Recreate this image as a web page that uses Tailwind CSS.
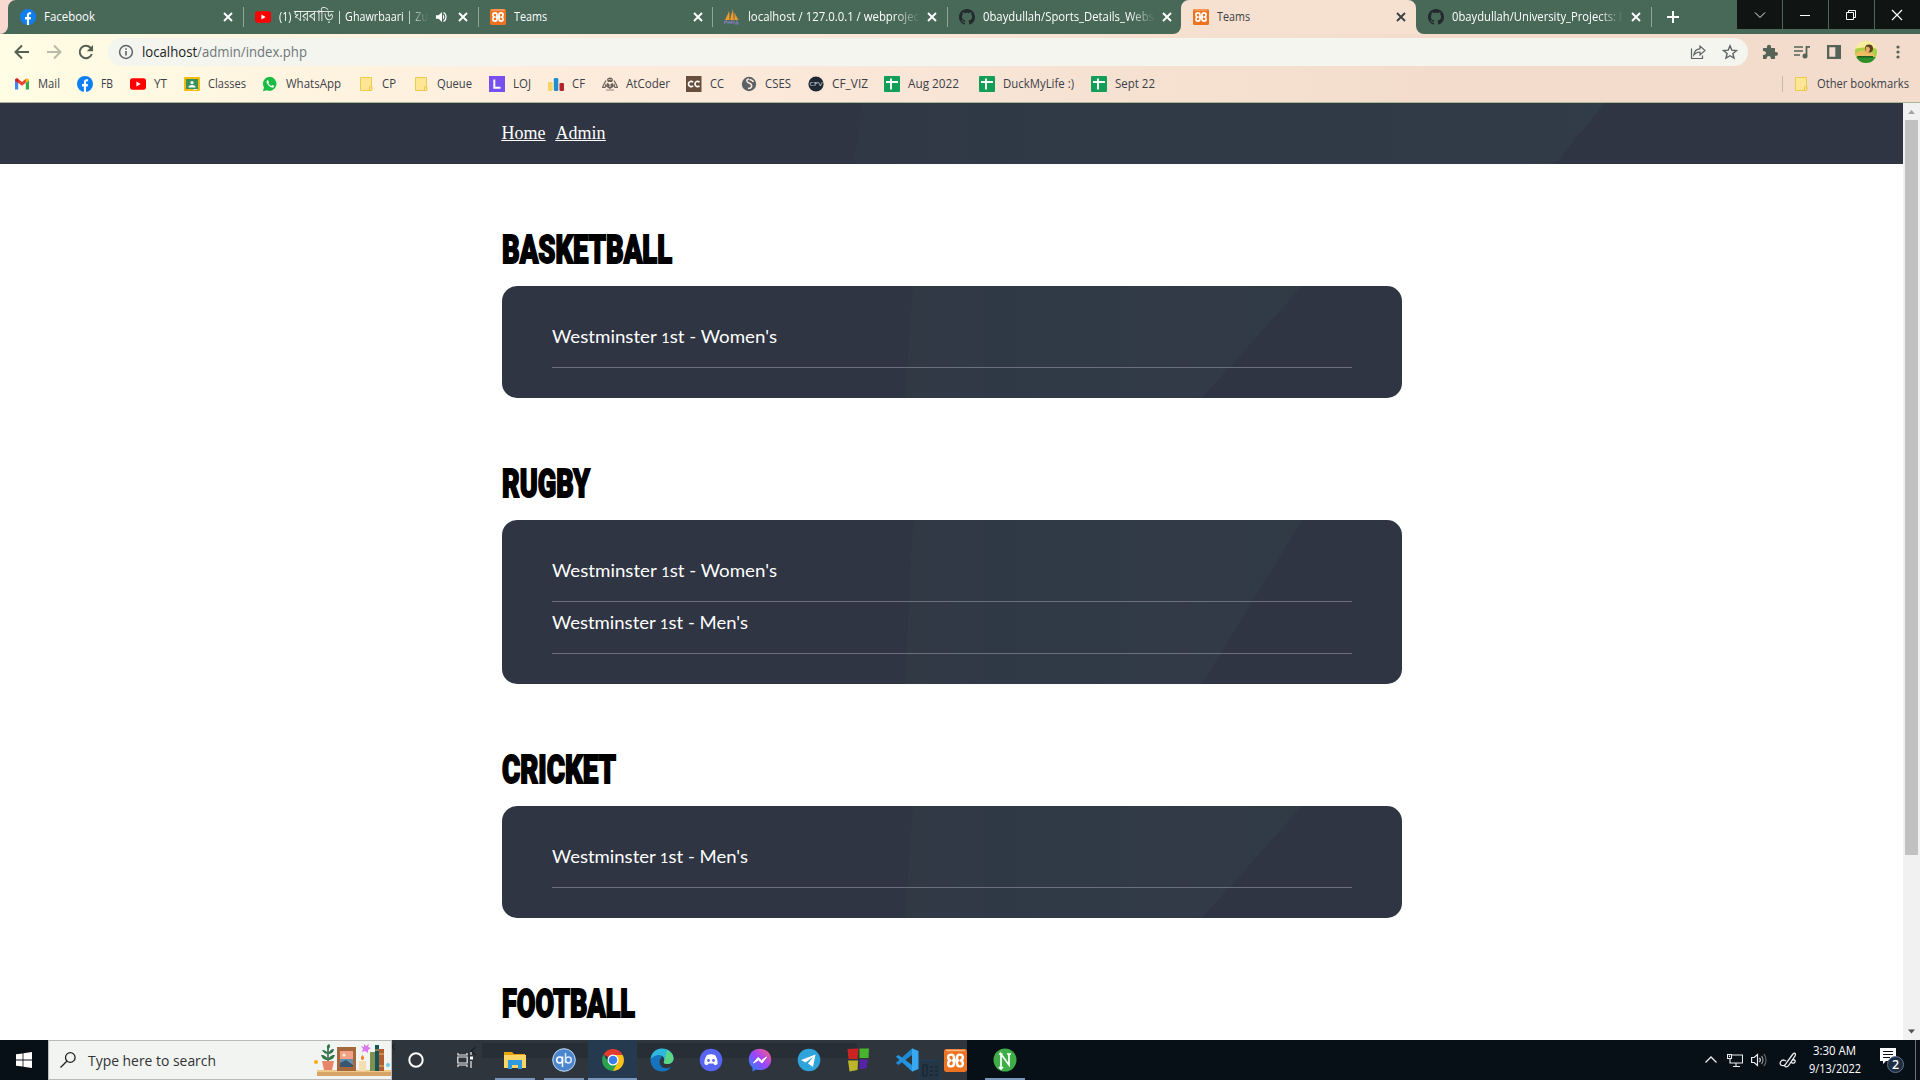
<!DOCTYPE html>
<html lang="en">
<head>
<meta charset="utf-8">
<title>Teams</title>
<script src="https://cdn.jsdelivr.net/npm/@tailwindcss/browser@4"></script>
</head>
<body class="w-[1920px] h-[1080px] overflow-hidden bg-white flex flex-col font-['Open_Sans','Noto_Sans',sans-serif] text-xs">

<svg class="hidden">
  <symbol id="fb" viewBox="0 0 16 16"><circle cx="8" cy="8" r="8" fill="#0d7ff2"/><path d="M6.9 16v-5.6H5V8h1.9V6.3c0-2 1.1-3 2.9-3 .7 0 1.3.1 1.3.1v1.9h-.9c-.9 0-1.2.5-1.2 1.1V8H11l-.4 2.4H9V16z" fill="#fff"/></symbol>
  <symbol id="yt" viewBox="0 0 16 16"><rect y="2.3" width="16" height="11.4" rx="2.6" fill="#f00"/><path d="M6.4 5.6v4.8L10.6 8z" fill="#fff"/></symbol>
  <symbol id="xampp" viewBox="0 0 16 16"><rect width="16" height="16" rx="1.5" fill="#ee7320"/><rect x="1.5" y=".5" width="13" height="1" fill="#f8b98c"/><path d="M7 6.200C7 4.400 6.300 3.900 5 3.900 3.400 3.900 2.900 4.800 2.900 5.800 2.900 6.900 3.600 7.800 4.500 8 3.600 8.200 2.900 9.200 2.900 10.200c0 1 .5 1.900 2.100 1.900 1.300 0 2-.5 2-2.300M9 6.200c0-1.800.7-2.300 2-2.300 1.600 0 2.100.9 2.100 1.900 0 1.100-.7 2-1.600 2.200.9.200 1.600 1.200 1.600 2.200 0 1-.5 1.900-2.100 1.900-1.300 0-2-.5-2-2.300M6.300 8h3.400M7 6v1l-.7 1 .7 1v1M9 6v1l.7 1-.7 1v1" fill="none" stroke="#fff" stroke-width="1.700" stroke-linejoin="round"/></symbol>
  <symbol id="pma" viewBox="0 0 16 16"><path d="M1 11L5 2.500 5.500 11zM6 11L8.500.5l1.500 10.500zM10.500 11V4l4 7z" fill="#f59a24"/><path d="M5 2.500L6 11M8.500.5L10.500 11M10.500 4l3.500 7" stroke="#aa8554" stroke-width=".8"/><path d="M.5 15v-3h2v1.500h-2M4 12v3m0-1.500h2m0-1.500v3m1.500 0v-3l1.200 1.500L10 12v3m1.500 0l1.500-3 1.500 3z" fill="none" stroke="#777aa8" stroke-width="1.100"/></symbol>
  <symbol id="gh" viewBox="0 0 16 16"><path fill="#24292f" d="M8 0C3.580 0 0 3.580 0 8c0 3.540 2.290 6.530 5.470 7.590.4.070.55-.17.55-.38 0-.19-.01-.82-.01-1.490-2.010.37-2.530-.49-2.690-.94-.09-.23-.48-.94-.82-1.130-.28-.15-.68-.52-.01-.53.63-.01 1.080.58 1.230.82.72 1.210 1.870.87 2.330.66.07-.52.28-.87.51-1.070-1.780-.2-3.640-.89-3.640-3.950 0-.87.31-1.590.82-2.150-.08-.2-.36-1.020.08-2.120 0 0 .67-.21 2.200.82.64-.18 1.320-.27 2-.27s1.360.09 2 .27c1.530-1.040 2.200-.82 2.200-.82.44 1.100.16 1.920.08 2.120.51.56.82 1.270.82 2.150 0 3.070-1.870 3.750-3.650 3.950.29.25.54.73.54 1.480 0 1.070-.01 1.930-.01 2.200 0 .21.15.46.55.38A8.010 8.010 0 0 0 16 8c0-4.420-3.580-8-8-8z"/></symbol>
  <symbol id="x" viewBox="0 0 16 16"><path d="M4 4l8 8M12 4l-8 8" stroke="currentColor" stroke-width="1.900"/></symbol>
  <symbol id="speaker" viewBox="0 0 16 16"><path d="M3 6.200h2.500L9 3v10L5.500 9.800H3zM10 5.500c1.700 1 1.700 4 0 5z" fill="currentColor"/><path d="M10.500 3.500c3.300 1.500 3.300 7.500 0 9" fill="none" stroke="currentColor" stroke-width="1.200"/></symbol>
  <symbol id="gmail" viewBox="0 0 16 16"><path d="M1 13.500V4l3.200 2.400v7.100z" fill="#4285f4"/><path d="M11.800 13.500V6.400L15 4v9.500z" fill="#34a853"/><path d="M1 4.500C1 2.300 3 2 4 2.800L8 5.900 12 2.800v3.800L8 9.700 1 4.600z" fill="#ea4335"/><path d="M11.800 2.900c1.200-1 3.200-.4 3.200 1.600l-3.200 2.400z" fill="#fbbc04"/><path d="M1 4.400c0-1.600 1.900-2.400 3.200-1.500v4z" fill="#c5221f"/></symbol>
  <symbol id="classes" viewBox="0 0 16 16"><rect y="1" width="16" height="14" rx="1" fill="#f6b912"/><rect x="2" y="3" width="12" height="10" fill="#36935a"/><circle cx="8" cy="6.700" r="1.600" fill="#fff"/><path d="M4.300 11.500c.2-3.300 7.200-3.300 7.400 0z" fill="#fff"/><path d="M9.500 13h3.500v1H9.500z" fill="#eee"/></symbol>
  <symbol id="wa" viewBox="0 0 16 16"><path d="M8 .8a7 7 0 0 0-6 10.600L.9 15.300l4-1A7 7 0 1 0 8 .8z" fill="#18bd45"/><path d="M5.300 4.300c-.9.700-1 2-.2 3.300 1.200 2 2.800 3.500 5 4 1.200.2 2.200-.8 2-1.600-.3-.5-1.400-.9-1.900-1l-.9 1c-1.500-.6-2.300-1.500-3-2.700l.7-.9-.8-2z" fill="#fff"/></symbol>
  <symbol id="folder" viewBox="0 0 16 16"><path d="M2.500 1.500h11v10.500h-1v2.500h-10z" fill="#ffe694" stroke="#ecc94f"/><rect x="11.500" y="10.500" width="2.500" height="4" rx="1" fill="#ffe694" stroke="#e8c33c"/></symbol>
  <symbol id="loj" viewBox="0 0 16 16"><rect width="16" height="16" fill="#7750f0"/><path d="M5.300 3.500v8.200h6.200" fill="none" stroke="#fff" stroke-width="2"/></symbol>
  <symbol id="cf" viewBox="0 0 16 16"><rect y="6" width="4.500" height="9" rx="1.200" fill="#f8d35e"/><rect x="5.800" y="2" width="4.500" height="13" rx="1.200" fill="#1f8fce"/><rect x="11.500" y="7" width="4.500" height="8" rx="1.200" fill="#b5222b"/></symbol>
  <symbol id="atc" viewBox="0 0 16 16"><path d="M5 4c0-3.500 6-3.500 6 0l-1 2H6zM5.500 6.500L8 9l2.500-2.500 1.500 4L8 13l-4-2.500z" fill="#6b6259"/><path d="M4 4.500L1.500 9 .6 11.500h2.500L4 8M12 4.500L14.500 9l.9 2.500h-2.500L12 8" fill="none" stroke="#6b645c" stroke-width="1.200"/><path d="M4 14h8" stroke="#8c8379"/><path d="M6.500 3.500h1m1 0h1M7 10h2" stroke="#f5e8d8"/></symbol>
  <symbol id="cc" viewBox="0 0 16 16"><rect width="15.500" height="16" fill="#694e3d"/><path d="M7 6.300C5.500 4.500 2.500 5.300 2.500 8S5.500 11.500 7 9.700M13.500 6.300C12 4.500 9 5.300 9 8s3 3.500 4.500 1.700" fill="none" stroke="#fff" stroke-width="1.700"/></symbol>
  <symbol id="cses" viewBox="0 0 16 16"><circle cx="8" cy="8" r="7.200" fill="#5b6166"/><path d="M8 3C5 3 5.500 6.500 8 7c3 .8 3.500 3.500 1.500 5l-2.500.5M8.500 3.500c1.500.5 3 .5 4 2.500" fill="none" stroke="#fbe9d9" stroke-width="1.600"/></symbol>
  <symbol id="cfv" viewBox="0 0 16 16"><circle cx="8" cy="8" r="7.600" fill="#1e2830"/><text x="1.500" y="10.300" textLength="13" lengthAdjust="spacingAndGlyphs" font-family="Lato" font-size="6.500" fill="#d7dde0">CFV</text></symbol>
  <symbol id="sheet" viewBox="0 0 16 16"><rect width="16" height="16" rx="1" fill="#129e57"/><path d="M7 2.500v11M2 6h12" stroke="#fff" stroke-width="1.900"/></symbol>
</svg>

<!-- Tab strip -->
<div class="flex h-[34px] shrink-0 bg-[#486858] text-white relative">
  <div class="w-[8.5px] shrink-0"></div>
  <div id="tabs" class="flex h-full w-[1642px] shrink-0"></div>
  <div class="w-[45px] flex items-center justify-center shrink-0"><svg class="w-4 h-4" viewBox="0 0 16 16"><path d="M8 2v12M2 8h12" stroke="#fff" stroke-width="2"/></svg></div>
  <div class="ml-auto flex h-[29px] gap-px">
    <div class="w-[45px] bg-[#101513] flex items-center justify-center"><svg class="w-3 h-3" viewBox="0 0 12 12"><path d="M1 3.500l5 5 5-5" fill="none" stroke="#eee"/></svg></div>
    <div class="w-[45px] bg-[#101513] flex items-center justify-center pr-px"><svg class="w-3 h-3" viewBox="0 0 12 12"><path d="M1 6.500h10" stroke="#fff"/></svg></div>
    <div class="w-[45px] bg-[#101513] flex items-center justify-center pr-px"><svg class="w-3 h-3" viewBox="0 0 12 12"><path d="M1.500 3.500h7v7h-7zM3.500 3V1.500h7v7H9" fill="none" stroke="#fff"/></svg></div>
    <div class="w-[45px] bg-[#101513] flex items-center justify-center pr-px"><svg class="w-3 h-3" viewBox="0 0 12 12"><path d="M1 1l10 10M11 1L1 11" stroke="#fff" stroke-width="1.200"/></svg></div>
  </div>
  <svg class="absolute left-0 top-0 w-4 h-[34px]" viewBox="0 0 16 34"><path d="M0 0h16a8 8 0 0 0-8 8v18a8 8 0 0 1-8 8z" fill="#f9d8cf"/></svg>
</div>

<!-- Toolbar and bookmarks -->
<div class="h-[69px] shrink-0 flex flex-col border-b border-[#a9b598] bg-linear-to-r from-[#fffde4] via-[#fdecdc] via-30% to-[#f3dccc] to-75%">
  <div class="flex items-center h-9 text-[#566457]">
    <div class="flex items-center pl-3 gap-3 w-[108px]">
      <svg class="w-5 h-5" viewBox="0 0 20 20"><path d="M17 10H4M10 3.500L3.500 10l6.500 6.500" fill="none" stroke="#556055" stroke-width="2"/></svg>
      <svg class="w-5 h-5" viewBox="0 0 20 20"><path d="M3 10h13M10 3.500l6.500 6.500-6.500 6.500" fill="none" stroke="#b9bba9" stroke-width="2"/></svg>
      <svg class="w-5 h-5" viewBox="0 0 20 20"><path d="M15.800 12A6.200 6.200 0 1 1 14.500 5.700L16 7.200" fill="none" stroke="#556055" stroke-width="2"/><path d="M17 3v6.200h-6.200z" fill="#556055"/></svg>
    </div>
    <div class="flex items-center h-7 w-[1640px] rounded-full bg-[#f3f5ee] pl-2.5">
      <svg class="w-4 h-4" viewBox="0 0 16 16"><circle cx="8" cy="8" r="6.400" fill="none" stroke="#5f6368" stroke-width="1.500"/><path d="M8 7v4.500M8 4.300v1.500" stroke="#5f6368" stroke-width="1.600"/></svg>
      <svg class="ml-2 w-[165px] h-5 overflow-visible text-sm" fill="#70757a"><text y="15" textLength="165" lengthAdjust="spacingAndGlyphs"><tspan fill="#222">localhost</tspan>/admin/index.php</text></svg>
      <div class="ml-auto flex items-center gap-4 pr-2.5">
        <svg class="w-4 h-4" viewBox="0 0 16 16"><path d="M1.500 4.500v10h11v-3" fill="none" stroke="#5f6368" stroke-width="1.200"/><path d="M3.800 11C4.300 7 6.500 5 10 4.800V2l5 4.500-5 4.500V8C7.500 8 5.500 8.800 3.800 11z" fill="none" stroke="#5f6368" stroke-width="1.200"/></svg>
        <svg class="w-4 h-4" viewBox="0 0 16 16"><path d="M8 1.800l1.800 4.300 4.700.4-3.600 3 1.100 4.600L8 11.700 4 14.100l1.100-4.600-3.600-3 4.700-.4z" fill="none" stroke="#5f6368" stroke-width="1.400"/></svg>
      </div>
    </div>
    <div class="flex items-center pl-[14px] gap-4">
      <svg class="w-4 h-4" viewBox="0 0 16 16"><path d="M1 4h4c-1-4.500 5-4.500 4 0h4v4c4-1 4 4.500 0 3.800V15H9c0-4-4.500-4-4.500 0H1v-4c4 0 4-4 0-4z" fill="#566457"/></svg>
      <svg class="w-4 h-4" viewBox="0 0 16 16"><path d="M0 3h9M0 7h9M0 11h6" stroke="#566457" stroke-width="1.600"/><path d="M16 2.800h-3.500v8.400" fill="none" stroke="#566457" stroke-width="1.800"/><circle cx="11" cy="12" r="2.500" fill="#566457"/></svg>
      <svg class="w-4 h-4" viewBox="0 0 16 16"><path d="M1 1h14v14H1zM3.300 3.300v9.400h6V3.300z" fill="#566457" fill-rule="evenodd"/></svg>
      <svg class="w-[22px] h-[22px] -ml-[3px]" viewBox="0 0 22 22"><clipPath id="av"><circle cx="11" cy="11" r="11"/></clipPath><g clip-path="url(#av)"><path d="M0 0h22v22H0z" fill="#f8ee9a"/><path d="M0 8c5-2 17-2 22 0v14H0z" fill="#a9cf45"/><path d="M0 16h22v6H0z" fill="#2f8f2c"/><path d="M1 13c2-4 8-4 11-3l5 2c3 1 3 4 0 4H4c-2 0-3-1-3-3z" fill="#edbd66"/><circle cx="14" cy="7.500" r="4" fill="#5f3f22"/><path d="M11 6c3-1 4 1 4 3l-2 3c-2 0-3-3-2-6z" fill="#e5b063"/><path d="M2 15h16v1.500H3z" fill="#1f5d20"/></g></svg>
      <svg class="w-4 h-4 -ml-[3px]" viewBox="0 0 16 16" fill="#566457"><circle cx="8" cy="3" r="1.600"/><circle cx="8" cy="8" r="1.600"/><circle cx="8" cy="13" r="1.600"/></svg>
    </div>
  </div>
  <div class="flex items-center h-7 text-[#3c4048]">
    <div id="bookmarks" class="flex items-center pl-[14px]"></div>
    <div class="ml-auto flex items-center pr-[11px]">
      <div class="w-px h-4 bg-[#c9b7a8]"></div>
      <svg class="w-4 h-4 ml-2.5"><use href="#folder"/></svg>
      <svg class="ml-2 w-[92px] h-5 overflow-visible" fill="currentColor"><text y="14" textLength="92" lengthAdjust="spacingAndGlyphs">Other bookmarks</text></svg>
    </div>
  </div>
</div>

<!-- Page -->
<div class="flex h-[937px] shrink-0">
  <main class="w-[1903px] h-full overflow-hidden bg-white">
    <header class="h-[61px] bg-[#2f3542] relative">
      <svg class="absolute inset-0 w-full h-full" preserveAspectRatio="none" viewBox="0 0 1903 61"><defs><linearGradient id="hg"><stop offset="0" stop-color="#313845"/><stop offset=".25" stop-color="#2f3a46"/><stop offset=".8" stop-color="#313a47"/><stop offset="1" stop-color="#303c47"/></linearGradient></defs><path d="M862 0H1605L1555 61H854z" fill="url(#hg)"/></svg>
      <nav class="relative flex gap-2.5 pl-[501.5px] pt-[18px] font-['Liberation_Serif',serif] text-[18px] leading-6 text-white underline"><a>Home</a><a>Admin</a></nav>
    </header>
    <div id="sections" class="w-[900px] ml-[502px]"></div>
  </main>
  <div class="w-[17px] bg-[#f1f1f1] flex flex-col items-center justify-between">
    <svg class="w-[17px] h-[17px]" viewBox="0 0 17 17"><path d="M5 11l3.500-4 3.500 4z" fill="#a3a3a3"/></svg>
    <div class="w-[13px] h-[735px] bg-[#c1c1c1] mb-auto"></div>
    <svg class="w-[17px] h-[17px]" viewBox="0 0 17 17"><path d="M5 6.500l3.500 4 3.500-4z" fill="#505050"/></svg>
  </div>
</div>

<!-- Taskbar -->
<div class="h-10 shrink-0 flex bg-[#070f17] text-white">
  <div class="w-12 shrink-0 flex items-center justify-center"><svg class="w-4 h-4" viewBox="0 0 16 16" fill="#fff"><path d="M0 2.300l6.600-.9v6.200H0zM7.400 1.300L16 0v7.600H7.400zM0 8.400h6.600v6.200L0 13.700zM7.400 8.400H16V16l-8.600-1.200z"/></svg></div>
  <div class="w-[344px] shrink-0 bg-[#f2f4f2] border border-[#bbb] flex items-center pl-[11px] text-[#222]">
    <svg class="w-4 h-4" viewBox="0 0 16 16"><circle cx="10.300" cy="5.500" r="4.800" fill="none" stroke="#222" stroke-width="1.300"/><path d="M6.800 9.200L.5 15.500" stroke="#222" stroke-width="1.300"/></svg>
    <svg class="ml-3 w-32 h-5 overflow-visible text-[15px]" fill="#333"><text y="16" textLength="128" lengthAdjust="spacingAndGlyphs">Type here to search</text></svg>
    <svg class="ml-auto w-[78px] h-[38px]" viewBox="0 0 78 38"><path d="M4 30h74v5H4z" fill="#d9a566"/><path d="M4 29h74v2H4z" fill="#efc98c"/><circle cx="3" cy="21" r="2" fill="#fba91a"/><path d="M9 20h12l-2 9h-8z" fill="#e88468"/><path d="M15 20V7" stroke="#245c38" stroke-width="1.500"/><path d="M15 19c-4 0-6-2-7-5 4 0 6 2 7 5 1-3 3-5 7-5-1 3-3 5-7 5zM15 13c-3 0-5-2-6-4 3 0 5 1 6 4 1-3 3-5 6-5 0 3-3 5-6 5zM15 8c-2-2-1-4 1-5 2 2 1 4-1 5z" fill="#2f7445"/><path d="M24 6h19v24H24z" fill="#a5683d"/><path d="M27 10h13v16H27z" fill="#f2a188"/><path d="M27 18h13v8H27z" fill="#668fae"/><path d="M27 22l6-3 7 5v2H27z" fill="#37566f"/><circle cx="31" cy="14" r="1.500" fill="#fff0bd"/><path d="M46 20h7v10h-7z" fill="#f7deb1"/><path d="M49.500 14c3 3 1 5 0 5s-3-2 0-5z" fill="#f18827"/><path d="M51 3l2 2 3-2-1 3 3 1-3 2 0 3-3-2-3 1 1-3-2-3 3 1z" fill="#d979ef"/><path d="M57 11h5v19h-5z" fill="#80914f"/><path d="M62 4h4v26h-4z" fill="#17535a"/><path d="M66 8h5v22h-5z" fill="#b15e33"/><path d="M62 9h4M66 13h5M66 25h5" stroke="#e0b766"/><circle cx="75" cy="24" r="2" fill="#71cfe2"/></svg>
  </div>
  <div class="w-[575px] shrink-0 bg-[#2e353d] relative flex items-stretch">
    <svg class="absolute inset-0 w-[575px] h-10" viewBox="0 0 575 40"><path d="M90 3h375v15H90z" fill="#272e35"/><path d="M84 7l-5 4 5 4M3 4L0 7l3 3" fill="none" stroke="#1c232b" stroke-width="1.500"/><path d="M527.500 20.500h21v20h-21z" fill="#253543" stroke="#1b3e58"/><path d="M531 25h4v11h-4zM538 27h3m2 0h3M538 31h3m2 0h3M538 35h3m2 0h3" fill="none" stroke="#17222d"/></svg>
    <div class="relative w-12 shrink-0 flex items-center justify-center"><svg class="w-4 h-4" viewBox="0 0 16 16"><circle cx="8" cy="8" r="6.700" fill="none" stroke="#fff" stroke-width="2"/></svg></div>
    <div class="relative w-[50px] shrink-0 flex items-center justify-center"><svg class="w-4 h-4" viewBox="0 0 16 16" fill="none" stroke="#eee" stroke-width="1.200"><path d="M1 1v2h9V1M1 15v-2h9v2M.8 5h9.400v6H.8zM14 0v3M14 9v7"/><path d="M13 4.500h3v3h-3z" fill="#fff" stroke="none"/></svg></div>
    <div id="apps" class="relative flex shrink-0"></div>
  </div>
  <div class="w-[76px] shrink-0 flex flex-col items-center justify-end">
    <svg class="w-6 h-6 mb-1.5" viewBox="0 0 24 24"><circle cx="12" cy="12" r="11.500" fill="#3fae49"/><path d="M8 18V6l8 11V6M6 6h3.500M14 6h4M8 17v4M6 19l2 2 2-2" fill="none" stroke="#fff" stroke-width="1.700"/></svg>
    <div class="w-10 h-0.5 bg-[#7b96bd]"></div>
  </div>
  <div class="ml-auto flex items-center">
    <svg class="w-3 h-3 mr-[10px]" viewBox="0 0 12 12"><path d="M.5 8.500L6 3l5.500 5.500" fill="none" stroke="#eee" stroke-width="1.300"/></svg>
    <svg class="w-4 h-4 mr-2" viewBox="0 0 16 16" fill="none" stroke="#eee" stroke-width="1.100"><path d="M5 3h10.500v8H3V7M9 11v3M6 14.500h7M.5 2.500h4v4h-4zM2.500 3.500v1.500"/></svg>
    <svg class="w-4 h-4 mr-3" viewBox="0 0 16 16" fill="none" stroke="#eee" stroke-width="1.200"><path d="M.6 5.500h2.500L6.500 2.500v11L3.100 10.500H.6zM8.500 6c1 1 1 3 0 4"/><path d="M10.500 4c2 2 2 6 0 8" stroke="#999"/><path d="M12.800 2c3 3 3 9 0 12" stroke="#666"/></svg>
    <svg class="w-[18px] h-[18px] mr-[12px]" viewBox="0 0 18 18" fill="none" stroke="#eee" stroke-width="1.300"><path d="M5 9c-3 0-5 3-3 5 3 2 5-1 6-3l6-8c2-2 3 0 2 2l-6 9c-2 3-5 2-4 0l7-10M5 9l2 1M12 11c1-3 5-3 4 0-1 2-3 1-4 0"/></svg>
    <svg class="w-[54px] h-10 mr-[17px] overflow-visible text-xs" fill="#fff"><text x="4" y="15" textLength="43" lengthAdjust="spacingAndGlyphs">3:30 AM</text><text x="0" y="33" textLength="52" lengthAdjust="spacingAndGlyphs">9/13/2022</text></svg>
    <svg class="w-6 h-[26px] mr-[11px]" viewBox="0 0 24 26"><path d="M0 1h16v13H6l-3 3v-3H0z" fill="#fff"/><path d="M3 4.500h10M3 7.500h10M3 10.500h7" stroke="#070f17"/><circle cx="15.500" cy="17.500" r="8" fill="#1e2e42" stroke="#64768c"/><text x="15.500" y="22" text-anchor="middle" font-size="12.500" font-weight="600" fill="#fff">2</text></svg>
    <div class="w-px h-10 bg-[#6c7278] mr-1"></div>
  </div>
</div>

<script>
const icon = (id, cls) => `<svg class="${cls}"><use href="#${id}"/></svg>`;
// A single line of text set to an exact width.
const line = (text, w, y = 14, h = 20) =>
  `<svg class="shrink-0 overflow-visible" width="${w}" height="${h}" fill="currentColor"><text y="${y}" textLength="${w}" lengthAdjust="spacingAndGlyphs">${text}</text></svg>`;

const tabs = [
  ['fb', 'Facebook', 51], ['yt', '(1) <tspan font-size="14.5">ঘরবাড়ি</tspan> | Ghawrbaari | Zu', 149, 'audio'], ['xampp', 'Teams', 33],
  ['pma', 'localhost / 127.0.0.1 / webprojec', 171], ['gh', '0baydullah/Sports_Details_Webs', 171],
  ['xampp', 'Teams', 33, 'active'], ['gh', '0baydullah/University_Projects: I', 170]];
document.getElementById('tabs').innerHTML = tabs.map(([ic, t, w, kind], i) => {
  const on = kind === 'active';
  const fade = w > 100 ? ' mask-r-from-85% mask-r-to-100%' : '';
  return `<div class="w-[234.6px] shrink-0 h-full flex items-center ${i ? 'pl-3' : 'pl-[11.5px]'} relative ${on ? 'text-[#3c4043]' : 'text-white'}">
    ${on ? '<svg class="absolute -left-2 top-0 w-[251px] h-[34px]" viewBox="0 0 251 34"><path d="M0 34a8 8 0 0 0 8-8V8a8 8 0 0 1 8-8h219a8 8 0 0 1 8 8v18a8 8 0 0 0 8 8z" fill="#f6e1d1"/></svg>' : ''}
    ${icon(ic, 'w-4 h-4 shrink-0 relative')}
    <div class="relative ml-2 overflow-hidden ${kind === 'audio' ? 'w-[150px]' : 'w-[172px]'}${fade}">${line(t, w)}</div>
    ${kind === 'audio' ? icon('speaker', 'w-4 h-4 shrink-0 ml-1') : ''}
    ${icon('x', 'relative w-4 h-4 shrink-0 ml-1' + (kind === 'audio' ? ' left-0.5' : ''))}
    ${(on || i === 4) ? '' : '<div class="absolute -right-px top-[7px] h-5 w-px bg-[#91a59b]"></div>'}
  </div>`; }).join('');

// icon, label, left edge of the icon, label width
const marks = [['gmail','Mail',14,22],['fb','FB',77,12],['yt','YT',130,13],['classes','Classes',184,38],['wa','WhatsApp',262,55],['folder','CP',358,14],['folder','Queue',413,35],['loj','LOJ',489,18],['cf','CF',548,13],['atc','AtCoder',602,44],['cc','CC',686,14],['cses','CSES',741,26],['cfv','CF_VIZ',808,36],['sheet','Aug 2022',884,51],['sheet','DuckMyLife :)',979,71],['sheet','Sept 22',1091,40]];
document.getElementById('bookmarks').innerHTML = marks.map(([ic, t, x, w], i) =>
  `<div class="flex items-center gap-2 shrink-0" style="width:${(marks[i + 1] ? marks[i + 1][2] : 1160) - x}px">${icon(ic, 'w-4 h-4 shrink-0')}${line(t, w)}</div>`).join('');

const sections = [['BASKETBALL', 170, ["Women's"]], ['RUGBY', 88, ["Women's", "Men's"]], ['CRICKET', 114, ["Men's"]], ['FOOTBALL', 133, []]];
document.getElementById('sections').innerHTML = sections.map(([name, w, teams]) => `
  <h2 class="h-[122px] font-['Roboto',sans-serif] font-black text-[39px] text-black stroke-black stroke-[1.8px]">${line(name, w, 99, 122)}</h2>
  ${teams.length ? `<div class="relative rounded-[15px] overflow-hidden bg-[#2f3542] px-[50px] py-[30px]">
    <svg class="absolute inset-0 w-full h-full" preserveAspectRatio="none" viewBox="0 0 900 112"><defs><linearGradient id="cg"><stop offset="0" stop-color="#313945"/><stop offset=".35" stop-color="#2f3a46"/><stop offset=".7" stop-color="#323a47"/><stop offset="1" stop-color="#303b46"/></linearGradient></defs><path d="M411 0H800L700 112H403z" fill="url(#cg)"/></svg>
    ${teams.map(t => `<div class="relative h-[52px] border-b border-[#6b707b] font-['Lato',sans-serif] text-[18px] text-white">${line('Westminster <tspan font-size="14">1</tspan>st - ' + t, t[0] === 'W' ? 225 : 196, 27, 51)}</div>`).join('')}
  </div>` : ''}`).join('');

const apps = [
  ['run', '<path d="M1 4h8l2 2h11v14H1z" fill="#e8a40e"/><path d="M1 7h22v13H1z" fill="#fbd667"/><path d="M5 12h14v9h-4v-4H9v4H5z" fill="#2f9ae0"/>'],
  ['run', '<circle cx="12" cy="12" r="11.300" fill="#4b85cd" stroke="#c8dbf4"/><path d="M10.500 8.500v10.500" stroke="#fff" stroke-width="1.500"/><circle cx="7.600" cy="12" r="2.900" fill="none" stroke="#fff" stroke-width="1.500"/><path d="M13.500 5v10" stroke="#dce9fa" stroke-width="1.500"/><circle cx="16.400" cy="12" r="2.900" fill="none" stroke="#dce9fa" stroke-width="1.500"/>'],
  ['active', '<path d="M2.500 6.500A11 11 0 0 1 21.500 6.500L12 12z" fill="#e33b2e"/><path d="M21.500 6.500A11 11 0 0 1 12 23L12 7h9.800z" fill="#fbc116"/><path d="M2.500 6.500A11 11 0 0 0 12 23L16.500 14.500 7.500 14.500z" fill="#2ba24c"/><circle cx="12" cy="12" r="5.500" fill="#fff"/><circle cx="12" cy="12" r="4.300" fill="#3d7fea"/>'],
  ['', '<path d="M12 .5C5 .5.5 6 .5 12c0 7 5.500 11.500 11.500 11.500 4 0 7-1.500 9-4.500-6 3-11.500 0-11.500-5 0-2 1-3.500 2-4z" fill="#1673bd"/><path d="M.5 11C1.500 4.500 6.500.5 12 .5 19 .5 23.500 5.500 23.500 10c0 4-3 6-6.500 6-2.500 0-4-1-3-2.500C15.500 9 11 6.500 7 7.200 3.500 8 1.500 9.500.5 11z" fill="#2fb7dc"/><path d="M17 2c4 2 6.500 5 6.500 8.500 0 3.500-3 5.500-6.500 5.500-2.500 0-4-1-3-2.500 1.500-4 2-8 3-11.500z" fill="#5cd685"/>'],
  ['', '<circle cx="12" cy="12" r="11.300" fill="#5865f2"/><path d="M8 7c3-1 5-1 8 0 2 3 3 6 2.500 9-1 1-2 1-3 1l-1-1.500h-5L8.500 17c-1 0-2 0-3-1C5 13 6 10 8 7z" fill="#fff"/><circle cx="9.500" cy="12.500" r="1.400" fill="#5865f2"/><circle cx="14.500" cy="12.500" r="1.400" fill="#5865f2"/>'],
  ['', '<defs><linearGradient id="mg" x1="0" y1="1" x2="1" y2="0"><stop offset="0" stop-color="#1590ff"/><stop offset=".5" stop-color="#9b45ff"/><stop offset="1" stop-color="#ff5b7b"/></linearGradient></defs><path d="M12 .8C5.500.8.8 5.500.8 11.500c0 3.500 1.500 6 3.700 8v4l3.500-2c1.200.4 2.500.6 4 .6 6.500 0 11.200-4.700 11.200-10.600S18.500.8 12 .8z" fill="url(#mg)"/><path d="M5.500 15L10 9.500l3.500 3 5-3.500-4.500 6-3.500-3z" fill="#fff" stroke="#fff"/>'],
  ['', '<circle cx="12" cy="12" r="11.300" fill="#2fa3dc"/><path d="M4 12l14.500-5.500L16 19l-5-3.500 5-6.500-7.500 5.500z" fill="#fff"/>'],
  ['', '<path d="M1.500 1l11-.5-1 10.500h-9z" fill="#cb2522"/><path d="M13.500.5h9.500l-.5 9.500h-9z" fill="#46b52c"/><path d="M2 12.500h10L11.500 22l-8 1.500z" fill="#bdb629"/><path d="M13.500 11.500h8.500l-1.500 9-7 .5z" fill="#5524a6"/>'],
  ['', '<path d="M.8 15L17 .5V7L3.500 17z" fill="#1f8ad2"/><path d="M.8 8.500L3.500 7 17 17v6.500z" fill="#2295e0"/><path d="M17 .3L23.500 3v18L17 23.700z" fill="#38a7f0"/>'],
  ['xampp', '']];
document.getElementById('apps').innerHTML = apps.map(([s, art]) => s === 'xampp'
  ? `<div class="w-9 h-10 shrink-0 flex items-center justify-end">${icon('xampp', 'w-[23px] h-[23px]')}</div>`
  : `<div class="w-[49px] h-10 shrink-0 flex flex-col items-center justify-end ${s === 'active' ? 'bg-[#263a4f]' : ''}">
    <svg class="w-6 h-6 mb-1.5" viewBox="0 0 24 24">${art}</svg>
    <div class="h-0.5 ${s === 'active' ? 'w-full bg-[#7b96bd]' : s === 'run' ? 'w-10 bg-[#7b96bd]' : 'w-0'}"></div>
  </div>`).join('');
</script>
</body>
</html>
